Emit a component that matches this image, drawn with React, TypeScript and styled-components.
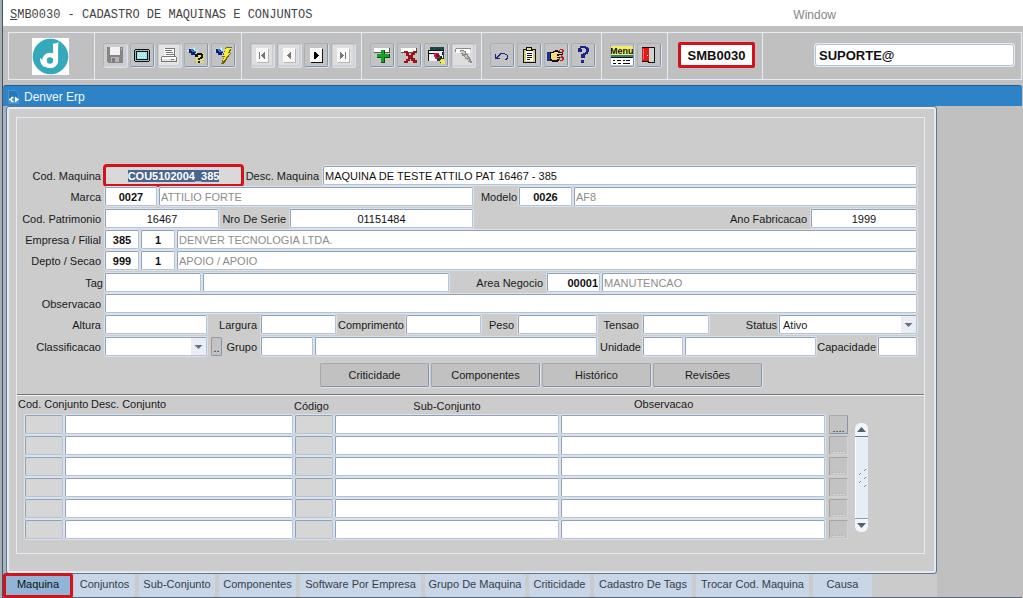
import React, { useEffect, useRef } from "react";
import styled, { createGlobalStyle, css } from "styled-components";

const GlobalStyle = createGlobalStyle`
  *, *::before, *::after { box-sizing: border-box; }
  body {
    margin: 0;
    background: #c0c0c0;
    color: #1a1a1a;
    font: 11px/13px "Liberation Sans", Arial, sans-serif;
  }
  button, input, select { font: inherit; color: inherit; margin: 0; }
`;

const light = "#e4ebf4";
const steel = "#8495ab";
const red = "#d3131b";

const Shell = styled.div`
  min-height: 100vh;
  display: flex;
  flex-direction: column;
  border-left: 2px solid #a4afb5;
`;

const Frame = styled.div`
  flex: 1;
  display: flex;
  flex-direction: column;
  border-left: 1px solid #46525e;
`;

const MenuBar = styled.header`
  display: flex;
  align-items: center;
  height: 26px;
  padding: 3px 187px 0 7px;
  background: #fff;
`;

const ScreenTitle = styled.h1`
  flex: 1;
  margin: 0;
  color: #444;
  font: 12px/14px "Liberation Mono", "Courier New", monospace;
`;

const MenuItem = styled.button`
  padding: 0;
  border: 0;
  background: none;
  color: #868686;
  font-size: 12px;
  line-height: 14px;
`;

const ToolBar = styled.div`
  display: flex;
  height: 48px;
  margin: 6px 1px 5px 5px;
  border: 1px solid ${light};
`;

const ToolGroup = styled.div`
  display: flex;
  align-items: center;
  gap: 3px;
  padding: 0 6px 2px 8px;
  border-right: 1px solid ${light};
`;

const LogoGroup = styled(ToolGroup)`
  width: 86px;
  padding: 0 0 0 23px;
`;

const CodeGroup = styled(ToolGroup)`
  padding: 0 7px 2px 10px;
`;

const UserGroup = styled(ToolGroup)`
  flex: 1;
  justify-content: flex-end;
  padding: 0 7px 2px;
  border-right: 0;
`;

const ToolButton = styled.button`
  display: grid;
  place-items: center;
  width: 24px;
  height: 24px;
  padding: 0;
  border: 1px solid #a9afb6;
  border-right-color: ${steel};
  border-bottom-color: ${steel};
  border-radius: 2px;
  background: #c3c3c3;
  box-shadow: 1px 1px 0 #dbe1ea;

  &:disabled {
    border-color: #aeb3b9 #cfd5de #cfd5de #aeb3b9;
    background: #cdcdcd;
  }
`;

const ScreenCode = styled.output`
  display: grid;
  place-items: center;
  width: 77px;
  height: 26px;
  border: 3px solid ${red};
  border-radius: 2px;
  background: #fff;
  color: #111;
  font-size: 13px;
  font-weight: bold;
`;

const UserInput = styled.input`
  width: 199px;
  height: 22px;
  padding: 0 3px;
  border: 1px solid #b4c3d6;
  border-radius: 3px;
  background: #fff;
  box-shadow: 0 0 0 1px ${light};
  color: #111;
  font-size: 13px;
  font-weight: bold;
`;

const WindowTitle = styled.div`
  display: flex;
  align-items: center;
  gap: 4px;
  height: 21px;
  margin-right: 1px;
  padding: 2px 5px 0;
  border-top: 1px solid #1f5f95;
  border-radius: 3px 3px 0 0;
  background: #2d83c5;
  color: #f2f8ff;
  font-size: 12px;
`;

const Workspace = styled.div`
  flex: 1;
  margin-right: 1px;
  padding: 0 85px 0 3px;
  border-bottom: 1px solid #55677c;
  background: linear-gradient(90deg, #a7b3c0 3px, #c0c0c0 3px);
`;

const Panel = styled.main`
  padding: 10px 11px 19px 9px;
  border: 1px solid #60788f;
  border-radius: 3px;
  background: #ccc;
  box-shadow: inset 0 0 0 2px #e4eaf2;
`;

const Group = styled.section`
  padding: 48px 0 12px;
  border: 1px solid ${light};
`;

const Form = styled.form`
  display: flex;
  flex-direction: column;
  gap: 3px;
  padding-right: 7px;
`;

const RowGroup = styled.div`
  display: flex;
  flex-direction: column;
  gap: 2px;
`;

const Row = styled.div`
  display: flex;
  align-items: center;
  gap: 2px;
`;

const Label = styled.label<{ $w?: number; $tight?: boolean }>`
  display: flex;
  flex: ${(p) => (p.$w ? `0 0 ${p.$w}px` : "1")};
  justify-content: flex-end;
  min-width: 0;
  padding: 2px ${(p) => (p.$tight ? 0 : 2)}px 0 0;
  white-space: nowrap;
`;

const fieldBox = css`
  height: 19px;
  border: 1px solid #93a1b5;
  border-right-color: #b4c4d8;
  border-bottom-color: #b4c4d8;
  border-radius: 2px;
  background: #fff;
  box-shadow: 0 0 0 1px #d9e2ed;
  outline: 0;
`;

const Field = styled.input<{ $w?: number; $align?: string; $bold?: boolean }>`
  ${fieldBox}
  flex: ${(p) => (p.$w ? `0 0 ${p.$w}px` : "1")};
  min-width: 0;
  padding: 1px 1px 0;
  color: #111;
  font-weight: ${(p) => (p.$bold ? "bold" : "normal")};
  text-align: ${(p) => p.$align ?? "left"};

  &:read-only { color: #8d8d8d; }
`;

const KeyField = styled(Field)`
  border: 0;
  background: #d9d9d9;
  outline: 3px solid ${red};
  outline-offset: -1px;
  box-shadow: none;

  &::selection { background: #4a658f; color: #fff; }
`;

const SelectWrap = styled.span<{ $w: number }>`
  position: relative;
  flex: 0 0 ${(p) => p.$w}px;
  height: 19px;

  svg {
    position: absolute;
    top: 1px;
    right: 1px;
    pointer-events: none;
  }
`;

const Select = styled.select`
  ${fieldBox}
  display: block;
  width: 100%;
  padding: 1px 16px 0 3px;
  appearance: none;
`;

const SmallButton = styled.button`
  flex: none;
  width: 11px;
  height: 19px;
  margin-left: 2px;
  padding: 4px 0 0;
  border: 1px solid #999;
  border-right-color: ${steel};
  border-bottom-color: ${steel};
  border-radius: 2px;
  background: #c3c3c3;
`;

const ActionBar = styled.div`
  display: flex;
  justify-content: center;
  gap: 2px;
  margin: 7px 0;
  padding-left: 141px;
`;

const ActionButton = styled.button`
  width: 109px;
  height: 24px;
  padding: 0;
  border: 1px solid #a2a8af;
  border-right-color: ${steel};
  border-bottom-color: ${steel};
  border-radius: 2px;
  background: #c1c1c1;
  box-shadow: 1px 1px 0 #dde3ea;
`;

const Rule = styled.hr`
  height: 2px;
  margin: 0;
  border: 0;
  border-top: 1px solid #777;
  background: #f2f2f2;
`;

const Lower = styled.div`
  display: flex;
  align-items: flex-end;
  padding-right: 56px;
`;

const Grid = styled.table`
  flex: 1;
  table-layout: fixed;
  width: 100%;
  border-spacing: 2px;
  margin-left: 6px;

  th, td { padding: 0; height: 19px; line-height: 0; }
  th { height: 15px; font-weight: normal; white-space: nowrap; vertical-align: top; }
`;

const HeadText = styled.span<{ $start?: number; $low?: boolean }>`
  display: block;
  height: 15px;
  padding-top: ${(p) => (p.$low ? 2 : 0)}px;
  line-height: 12px;
  ${(p) =>
    p.$start !== undefined &&
    css`
      margin-left: ${p.$start}px;
      text-align: left;
    `}
`;

const Cell = styled(Field)<{ $grey?: boolean }>`
  width: 100%;
  background: ${(p) => (p.$grey ? "#d6d6d6" : "#fff")};
`;

const RowButton = styled.button`
  width: 19px;
  height: 19px;
  margin-left: 2px;
  padding: 6px 0 0;
  border: 1px solid #aaa;
  border-right-color: ${steel};
  border-bottom-color: ${steel};
  border-radius: 1px;
  background: #c3c3c3;
  color: #222;
  line-height: 10px;

  &:disabled {
    border-color: #a5a5a5 #d0d4da #d0d4da #a5a5a5;
    color: #e9e9e9;
    text-shadow: -1px -1px 0 #aaa;
  }
`;

const ScrollBar = styled.div`
  display: flex;
  flex-direction: column;
  width: 13px;
  height: 109px;
  margin: 0 0 9px 5px;
  border-radius: 6px;
  background: #e6edf6;
  overflow: hidden;
`;

const ScrollArrow = styled.button<{ $down?: boolean }>`
  height: 14px;
  padding: 0;
  border: 0;
  border-bottom: ${(p) => (p.$down ? "0" : "1px solid #6c7785")};
  border-top: ${(p) => (p.$down ? "1px solid #8ba0b8" : "0")};
  background: #f0f5fb;
  line-height: 0;
`;

const ScrollThumb = styled.div`
  flex: 1;
  display: grid;
  place-items: center;
  border-left: 1px solid #fff;
`;

const Tabs = styled.nav`
  display: flex;
  gap: 4px;
  height: 23px;
  margin-left: -2px;
  background: #cbcbcb;
`;

const Tab = styled.button<{ $w: number; $active?: boolean }>`
  flex: 0 1 ${(p) => p.$w}px;
  padding: 0 0 2px;
  border: 0;
  border-radius: 2px;
  background: #c9d6e7;
  color: #333f4c;
  white-space: nowrap;

  ${(p) =>
    p.$active &&
    css`
      margin-right: -2px;
      background: #92b5d7;
      color: #111;
      outline: 3px solid ${red};
      outline-offset: -2px;
    `}
`;

const Logo = () => (
  <svg width="37" height="37" viewBox="0 0 37 37" aria-label="Denver">
    <path fill="#fff" d="M0 0h37v37H0z" />
    <circle cx="18.500" cy="18.500" r="17.800" fill="#33a9bb" />
    <circle cx="18" cy="22.500" r="5.500" fill="none" stroke="#fff" strokeWidth="4.600" />
    <path fill="#fff" d="M21 5.500c2 0 4.500-.5 5.500-1.500-.5 3-.4 6-.4 9v10c-.3 4-3 6-6 7l1-6V8z" />
    <path fill="#fff" d="M8 20c2 1 3 3 6 7l-1 2c-3-1-5-4-5-9z" />
  </svg>
);

const Icon = ({ children }: { children: React.ReactNode }) => (
  <svg width="20" height="20" viewBox="0 0 20 20" shapeRendering="crispEdges" aria-hidden="true">
    {children}
  </svg>
);

const Save = () => (
  <Icon>
    <path fill="#858585" d="M2 2h16v16H3l-1-1z" />
    <path fill="#f2f2f2" d="M5 2h10v8H5z" />
    <path fill="#b5b5b5" d="M16 3h1v2h-1zM6 12h8v5H6z" />
    <path fill="#7b7b7b" d="M7 13h3v4H7z" />
  </Icon>
);

const Screen = () => (
  <Icon>
    <path fill="#111" d="M3 4h14v1h1v11h-1v1H3v-1H2V5h1z" />
    <path fill="#9fb6bd" d="M3 5h14v11H3z" />
    <path fill="#111" d="M4 6h12v9H4z" />
    <path fill="#9fe4e4" d="M5 7h10v7H5z" />
    <path fill="#e3fbfb" d="M6 8h1v1H6zm2 0h1v1H8zm2 0h1v1h-1zm2 0h1v1h-1zM7 10h1v1H7zm2 0h1v1H9zm2 0h1v1h-1zm2 0h1v1h-1zM6 12h1v1H6zm2 0h1v1H8zm2 0h1v1h-1zm2 0h1v1h-1z" />
  </Icon>
);

const Print = () => (
  <Icon>
    <path fill="#e3e3e3" d="M0 0h20v20H0z" />
    <path fill="#fff" d="M5 3h10l1 8H5z" />
    <path fill="#777" d="M6 3h9v1H6zm0 2h7v1H6zm1 2h7v1H7zm0 2h8v1H7zM15 3h1v8h-1zM3 11h14v1H3zM2 12h1v4H2zm15 0h1v4h-1zM2 16h16v1H2zm10-2h3v1h-3z" />
    <path fill="#fff" d="M3 12h14v2H3z" />
  </Icon>
);

const Torch = () => (
  <>
    <path fill="#a9e6ee" d="M1 5h3V4h3V2h2v3h3v3H8v2H6V8H3V7H1z" />
    <path fill="#131e79" d="M3 4h3v1h2v1h2v2H9v2H5V8H3z" />
    <path fill="#3a7fd0" d="M5 4h2v2h3v1H6V6H5z" />
    <path fill="#f4fbff" d="M4 3h1v1H4zm4 0h1v2H8z" />
  </>
);

const EnterQuery = () => (
  <Icon>
    <path fill="#e2dc79" d="M10 8h8v10h-8z" />
    <path fill="#bdb969" d="M8 16h2v2H8zm9-7h1v1h-1zm0 3h1v1h-1zm-1 3h2v1h-2z" />
    <Torch />
    <path fill="#111" d="M11 8h5v1h1v4h-1v1h-2v1h-2v-2h2v-1h1v-2h-3v2H9V9h2zM12 16h2v2h-2z" />
  </Icon>
);

const ExecuteQuery = () => (
  <Icon>
    <Torch />
    <path fill="#6c6714" d="M13 2h6l-2 6h1l-7 11H8l3-7H9z" />
    <path fill="#f6ef31" d="M13 3h5l-3 5h2L9 18l3-7h-2z" />
  </Icon>
);

const NavIcon = ({ d, muted }: { d: string; muted?: boolean }) => (
  <Icon>
    {muted && <path fill="#dedede" d="M0 0h20v20H0z" />}
    <path fill={muted ? "#b6b6b6" : "#111"} d="M5 4h12v14H5z" />
    <path fill="#f8f8f8" d="M4 3h12v14H4z" />
    <path fill={muted ? "#777" : "#000"} d={d} />
  </Icon>
);

const Insert = () => (
  <Icon>
    <path fill="#555" d="M2 3h16v5H2z" />
    <path fill="#fff" d="M2 3h15v4H2z" />
    <path fill="#0b4f13" d="M9 5h4v4h5v4h-5v5H9v-5H5V9h4z" />
    <path fill="#18a126" d="M9 5h3v4h5v3h-5v5H9v-5H5V9h4z" />
  </Icon>
);

const Remove = () => (
  <Icon>
    <path fill="#555" d="M2 3h16v5H2z" />
    <path fill="#fff" d="M2 3h15v4H2z" />
    <path fill="#9e1118" d="M5 6h4v2h1v2h2V8h2V6h4v2h-2v2h-2v3h2v2h2v3h-4v-2h-2v-2h-1v2H9v2H5v-2h2v-2h2v-3H7V8H5z" />
  </Icon>
);

const ClearRecord = () => (
  <Icon>
    <path fill="#174747" d="M4 2h14v13H4z" />
    <path fill="#e9f1f1" d="M3 6h14v10H3z" />
    <path fill="#111" d="M2 5h16v1H2zm0 0h1v11H2zm14 2h1v3h-1zM3 8h5v1H3z" />
    <path fill="#cc1c55" d="M8 8h5v2h1v3h-2v1H9v-2H8z" />
    <path fill="#7c1133" d="M10 9h3v3h-3z" />
    <path fill="#163d21" d="M11 13h3v-2h2v2h2v5h-4v-2h-3z" />
    <path fill="#f3ec44" d="M15 14h3v2h1v3h-4v-2h-1z" />
  </Icon>
);

const Eraser = () => (
  <Icon>
    <path fill="#dedede" d="M0 0h20v20H0z" />
    <path fill="#fff" d="M3 4h14v4H3z" />
    <path fill="#8b8b8b" d="M3 3h15v1H3zM2 4h1v3H2zM7 5h4v1h2v2h1v1h1v2h1v1h1v2h1v2h1v2h-2v-1h-2v-2h-1v-1h-2v-2h-1v-1h-2V9H8V7H7z" />
    <path fill="#c9c9c9" d="M8 6h3v1h1v2h-2V8H8zM12 10h2v2h1v1h-2v-1h-1zM15 14h1v2h-1z" />
  </Icon>
);

const Undo = () => (
  <Icon>
    <path fill="#20247f" d="M3 9h1v3h1v-1h1v-1h1V9h1V8h5v1h2v1h1v4h-1v1h-2v-1h1v-1h1v-3h-2V9H9v1H8v1H7v1H6v1h2v1H3z" />
  </Icon>
);

const Clipboard = () => (
  <Icon>
    <path fill="#111" d="M4 4h3V2h6v2h4v14H4z" />
    <path fill="#d6cf84" d="M5 5h11v12H5z" />
    <path fill="#fff" d="M7 6h7v10H7z" />
    <path fill="#e8e270" d="M8 3h4v2H8z" />
    <path fill="#111" d="M7 5h7v1H7zm1 3h5v1H8zm0 2h5v1H8zm0 2h5v1H8zm0 2h3v1H8z" />
  </Icon>
);

const HandCut = () => (
  <Icon>
    <path fill="#1d2f91" d="M1 7h3v9H1z" />
    <path fill="#111" d="M4 7h3V6h2V5h3v1h1v1h4v3h-4v2h1v2h-1v2h-1v1H6v-1H4z" />
    <path fill="#f2dc7e" d="M5 8h3V7h4v1h4v1h-5v2h2v1h-2v1h2v1h-2v1H6v-1H5z" />
    <path fill="#c51d2b" d="M14 4h3v1h1v2h-1v1h-1V5h-2v2h-1V5h1zM15 10h1v1h1v1h1v3h-1v1h-3v-1h-1v-2h1v-1h1zm0 3h-1v2h2v-2z" />
  </Icon>
);

const Help = () => (
  <Icon>
    <path fill="#1d2389" d="M7 1h6v1h2v1h1v4h-1v2h-2v1h-1v3H8v-4h2V8h2V7h1V4h-1V3H8v1h1v3H5V3h2zM8 15h3v3H8z" />
  </Icon>
);

const MenuText = styled.text`
  fill: #111;
  font: bold 9px "Liberation Sans", Arial, sans-serif;
`;

const MenuIcon = () => (
  <svg width="22" height="20" viewBox="0 0 22 20" shapeRendering="crispEdges" aria-hidden="true">
    <path fill="#f1ed67" d="M0 1h22v9H0z" />
    <MenuText x="-1" y="9">Menu</MenuText>
    <path fill="#2e8088" d="M0 10h22v2H0z" />
    <path fill="#fff" d="M0 12h22v8H0z" />
    <path fill="#111" d="M0 12h22v1H0zm2 3h2v1H2zm4 0h4v1H6zm6 0h2v1h-2zm3 0h4v1h-4zM2 18h3v1H2zm5 0h3v1H7zm5 0h7v1h-7z" />
  </svg>
);

const Exit = () => (
  <Icon>
    <path fill="#111" d="M3 2h13v16H9v-1H3z" />
    <path fill="#cbd3d3" d="M10 3h5v14h-5z" />
    <path fill="#e51a16" d="M3 3h7v13H3z" />
    <path fill="#fff" d="M8 10h1v1H8z" />
    <path fill="#ee7b76" d="M4 4h1v10H4z" />
  </Icon>
);

const DocIcon = () => (
  <svg width="12" height="14" viewBox="0 0 12 14" aria-hidden="true">
    <path fill="#4794cc" d="M0 0h7l4 4v10H0z" />
    <path fill="#2477b8" d="M1 1h6l3 3v4H1z" />
    <path fill="none" stroke="#fff" strokeWidth="1.500" d="M5.500 7.500H4L2.800 9.500 4 11.500h1.500M1 9.500h2" />
    <path fill="#fff" d="M7 6.500v6l4-3z" />
  </svg>
);

const DropArrow = () => (
  <svg width="15" height="17" viewBox="0 0 15 17" aria-hidden="true">
    <path fill="#eaedf4" d="M0 0h15v17H0z" />
    <path fill="#667083" d="M3.500 7h8l-4 4z" />
  </svg>
);

const Arrow = ({ d }: { d: string }) => (
  <svg width="9" height="5" viewBox="0 0 9 5" aria-hidden="true">
    <path fill="#56606d" d={d} />
  </svg>
);

const tabs: [string, number][] = [
  ["Conjuntos", 61],
  ["Sub-Conjunto", 76],
  ["Componentes", 77],
  ["Software Por Empresa", 121],
  ["Grupo De Maquina", 100],
  ["Criticidade", 61],
  ["Cadastro De Tags", 98],
  ["Trocar Cod. Maquina", 113],
  ["Causa", 59],
];

const columns = ["Cod. Conjunto", "Desc. Conjunto", "Código", "Sub-Conjunto", "Observacao"];

export default function App() {
  const keyField = useRef<HTMLInputElement>(null);

  useEffect(() => {
    keyField.current?.focus();
    keyField.current?.select();
  }, []);

  return (
    <Shell>
      <GlobalStyle />
      <Frame>
        <MenuBar>
          <ScreenTitle>
            <u>S</u>MB0030 - CADASTRO DE MAQUINAS E CONJUNTOS
          </ScreenTitle>
          <MenuItem>Window</MenuItem>
        </MenuBar>

        <ToolBar role="toolbar">
          <LogoGroup><Logo /></LogoGroup>
          <ToolGroup>
            <ToolButton aria-label="Salvar" disabled><Save /></ToolButton>
            <ToolButton aria-label="Tela"><Screen /></ToolButton>
            <ToolButton aria-label="Imprimir" disabled><Print /></ToolButton>
            <ToolButton aria-label="Entrar consulta"><EnterQuery /></ToolButton>
            <ToolButton aria-label="Executar consulta"><ExecuteQuery /></ToolButton>
          </ToolGroup>
          <ToolGroup>
            <ToolButton aria-label="Primeiro" disabled><NavIcon muted d="M7 7h1v7H7zM9 10h1V9h1V8h1V7h1v7h-1v-1h-1v-1h-1v-1H9z" /></ToolButton>
            <ToolButton aria-label="Anterior" disabled><NavIcon muted d="M8 10h1V9h1V8h1V7h1v7h-1v-1h-1v-1H9v-1H8z" /></ToolButton>
            <ToolButton aria-label="Próximo"><NavIcon d="M8 7h2v1h1v1h1v1h1v1h-1v1h-1v1h-1v1H8z" /></ToolButton>
            <ToolButton aria-label="Último" disabled><NavIcon muted d="M7 7h1v1h1v1h1v1h1v1h-1v1H9v1H8v1H7zM12 7h1v7h-1z" /></ToolButton>
          </ToolGroup>
          <ToolGroup>
            <ToolButton aria-label="Inserir"><Insert /></ToolButton>
            <ToolButton aria-label="Excluir"><Remove /></ToolButton>
            <ToolButton aria-label="Limpar registro"><ClearRecord /></ToolButton>
            <ToolButton aria-label="Editar" disabled><Eraser /></ToolButton>
          </ToolGroup>
          <ToolGroup>
            <ToolButton aria-label="Desfazer"><Undo /></ToolButton>
            <ToolButton aria-label="Lista"><Clipboard /></ToolButton>
            <ToolButton aria-label="Recortar"><HandCut /></ToolButton>
            <ToolButton aria-label="Ajuda"><Help /></ToolButton>
          </ToolGroup>
          <ToolGroup>
            <ToolButton aria-label="Menu"><MenuIcon /></ToolButton>
            <ToolButton aria-label="Sair"><Exit /></ToolButton>
          </ToolGroup>
          <CodeGroup><ScreenCode>SMB0030</ScreenCode></CodeGroup>
          <UserGroup><UserInput aria-label="Usuario" defaultValue="SUPORTE@" /></UserGroup>
        </ToolBar>

        <WindowTitle><DocIcon />Denver Erp</WindowTitle>

        <Workspace>
          <Panel>
            <Group>
              <Form>
                <RowGroup>
                  <Row>
                    <Label $w={86} htmlFor="cod">Cod. Maquina</Label>
                    <KeyField ref={keyField} id="cod" $w={137} $align="center" $bold defaultValue="COU5102004_385" />
                    <Label $w={77} htmlFor="desc">Desc. Maquina</Label>
                    <Field id="desc" defaultValue="MAQUINA DE TESTE ATTILO PAT 16467 - 385" />
                  </Row>
                  <Row>
                    <Label $w={86} htmlFor="marca">Marca</Label>
                    <Field id="marca" $w={52} $align="center" $bold defaultValue="0027" />
                    <Field aria-label="Nome da marca" $w={314} readOnly defaultValue="ATTILIO FORTE" />
                    <Label $w={42} $tight htmlFor="modelo">Modelo</Label>
                    <Field id="modelo" $w={53} $align="center" $bold defaultValue="0026" />
                    <Field aria-label="Nome do modelo" readOnly defaultValue="AF8" />
                  </Row>
                </RowGroup>
                <RowGroup>
                  <Row>
                    <Label $w={86} htmlFor="patr">Cod. Patrimonio</Label>
                    <Field id="patr" $w={114} $align="center" defaultValue="16467" />
                    <Label $w={67} htmlFor="serie">Nro De Serie</Label>
                    <Field id="serie" $w={183} $align="center" defaultValue="01151484" />
                    <Label htmlFor="ano">Ano Fabricacao</Label>
                    <Field id="ano" $w={106} $align="center" defaultValue="1999" />
                  </Row>
                  <Row>
                    <Label $w={86} htmlFor="empresa">Empresa / Filial</Label>
                    <Field id="empresa" $w={34} $align="center" $bold defaultValue="385" />
                    <Field aria-label="Filial" $w={34} $align="center" $bold defaultValue="1" />
                    <Field aria-label="Nome da empresa" readOnly defaultValue="DENVER TECNOLOGIA LTDA." />
                  </Row>
                  <Row>
                    <Label $w={86} htmlFor="depto">Depto / Secao</Label>
                    <Field id="depto" $w={34} $align="center" $bold defaultValue="999" />
                    <Field aria-label="Secao" $w={34} $align="center" $bold defaultValue="1" />
                    <Field aria-label="Nome do depto" readOnly defaultValue="APOIO / APOIO" />
                  </Row>
                </RowGroup>
                <RowGroup>
                  <Row>
                    <Label $w={86} $tight htmlFor="tag">Tag</Label>
                    <Field id="tag" $w={96} />
                    <Field aria-label="Descricao da tag" $w={246} />
                    <Label $w={94} htmlFor="area">Area Negocio</Label>
                    <Field id="area" $w={53} $align="right" $bold defaultValue="00001" />
                    <Field aria-label="Nome da area" readOnly defaultValue="MANUTENCAO" />
                  </Row>
                  <Row>
                    <Label $w={86} htmlFor="obs">Observacao</Label>
                    <Field id="obs" />
                  </Row>
                  <Row>
                    <Label $w={86} htmlFor="altura">Altura</Label>
                    <Field id="altura" $w={102} />
                    <Label $w={50} htmlFor="largura">Largura</Label>
                    <Field id="largura" $w={75} />
                    <Label $w={66} $tight htmlFor="compr">Comprimento</Label>
                    <Field id="compr" $w={75} />
                    <Label $w={33} htmlFor="peso">Peso</Label>
                    <Field id="peso" $w={79} />
                    <Label $w={42} htmlFor="tensao">Tensao</Label>
                    <Field id="tensao" $w={66} />
                    <Label $tight htmlFor="status">Status</Label>
                    <SelectWrap $w={138}>
                      <Select id="status" defaultValue="Ativo">
                        <option>Ativo</option>
                      </Select>
                      <DropArrow />
                    </SelectWrap>
                  </Row>
                </RowGroup>
                <Row>
                  <Label $w={86} htmlFor="classe">Classificacao</Label>
                  <SelectWrap $w={102}>
                    <Select id="classe"><option /></Select>
                    <DropArrow />
                  </SelectWrap>
                  <SmallButton type="button">..</SmallButton>
                  <Label $w={35} htmlFor="grupo">Grupo</Label>
                  <Field id="grupo" $w={52} />
                  <Field aria-label="Nome do grupo" $w={282} />
                  <Label $w={42} $tight htmlFor="unidade">Unidade</Label>
                  <Field id="unidade" $w={40} />
                  <Field aria-label="Nome da unidade" />
                  <Label $w={58} $tight htmlFor="capac">Capacidade</Label>
                  <Field id="capac" $w={39} />
                </Row>
              </Form>

              <ActionBar>
                <ActionButton>Criticidade</ActionButton>
                <ActionButton>Componentes</ActionButton>
                <ActionButton>Histórico</ActionButton>
                <ActionButton>Revisões</ActionButton>
              </ActionBar>
              <Rule />

              <Lower>
                <Grid>
                  <colgroup>
                    <col width="38" />
                    <col width="228" />
                    <col width="38" />
                    <col width="224" />
                    <col />
                    <col width="21" />
                  </colgroup>
                  <thead>
                    <tr>
                      <th><HeadText $start={-7}>{columns[0]}</HeadText></th>
                      <th><HeadText $start={26}>{columns[1]}</HeadText></th>
                      <th><HeadText $start={-1} $low>{columns[2]}</HeadText></th>
                      <th><HeadText $low>{columns[3]}</HeadText></th>
                      <th><HeadText $start={73}>{columns[4]}</HeadText></th>
                      <th aria-label="Detalhe" />
                    </tr>
                  </thead>
                  <tbody>
                    {[0, 1, 2, 3, 4, 5].map((row) => (
                      <tr key={row}>
                        {columns.map((name, i) => (
                          <td key={name}>
                            <Cell aria-label={`${name} ${row + 1}`} $grey={i === 0 || i === 2} />
                          </td>
                        ))}
                        <td>
                          <RowButton disabled={row > 0}>....</RowButton>
                        </td>
                      </tr>
                    ))}
                  </tbody>
                </Grid>
                <ScrollBar>
                  <ScrollArrow aria-label="Acima"><Arrow d="M0 5h9L4.500 0z" /></ScrollArrow>
                  <ScrollThumb>
                    <svg width="9" height="20" viewBox="0 0 9 20" aria-hidden="true">
                      <path fill="none" stroke="#7e8fa5" d="M6 3l2-2M1 7l2-2M6 11l2-2M1 15l2-2M6 19l2-2" />
                    </svg>
                  </ScrollThumb>
                  <ScrollArrow aria-label="Abaixo" $down><Arrow d="M0 0h9L4.500 5z" /></ScrollArrow>
                </ScrollBar>
              </Lower>
            </Group>
          </Panel>

          <Tabs>
            <Tab $w={68} $active>Maquina</Tab>
            {tabs.map(([name, width]) => (
              <Tab key={name} $w={width}>{name}</Tab>
            ))}
          </Tabs>
        </Workspace>
      </Frame>
    </Shell>
  );
}
